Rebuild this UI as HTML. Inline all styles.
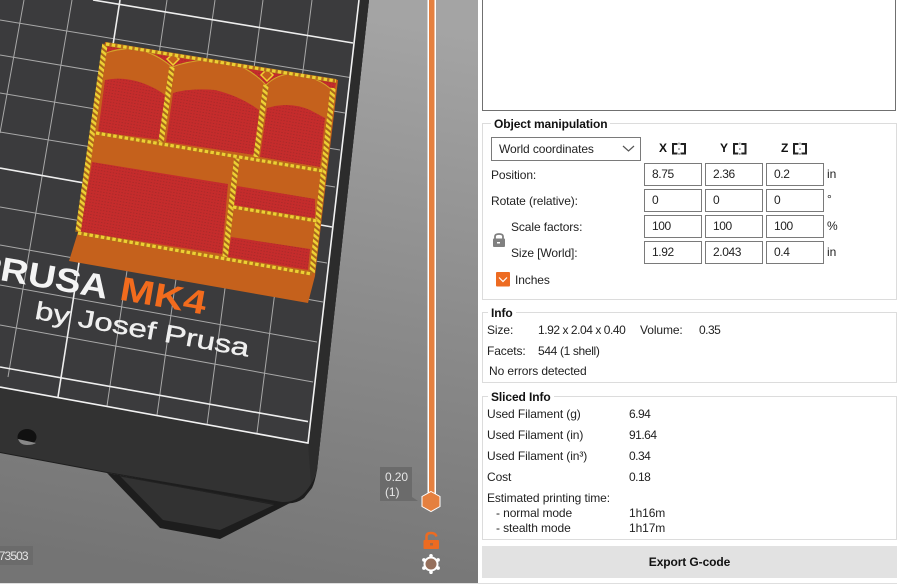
<!DOCTYPE html>
<html><head><meta charset="utf-8">
<style>
html,body{margin:0;padding:0;width:897px;height:584px;overflow:hidden;background:#fff}
body{position:relative;font-family:"Liberation Sans",sans-serif;font-size:12px;color:#222;letter-spacing:-.1px}
.t{position:absolute;white-space:nowrap;line-height:14px;height:14px}
.n{letter-spacing:-.5px}
.b{font-weight:bold;color:#111}
.g{position:absolute;border:1px solid #dcdcdc;box-sizing:border-box}
.i{position:absolute;border:1px solid #7a7a7a;box-sizing:border-box;width:58px;height:23px;line-height:21px;padding-left:7px;background:#fff;color:#222;letter-spacing:-.4px}
svg{position:absolute;left:0;top:0}
</style></head><body>
<svg width="897" height="584" viewBox="0 0 897 584" style="filter:blur(.3px)">
<defs>
<linearGradient id="bg" x1="0.6" y1="0" x2="0.45" y2="1">
<stop offset="0" stop-color="#a4a4a4"/><stop offset=".5" stop-color="#8b8b8b"/><stop offset="1" stop-color="#747474"/>
</linearGradient>
<pattern id="red" width="3" height="3" patternUnits="userSpaceOnUse" patternTransform="rotate(10)">
<rect width="3" height="3" fill="#c52c2c"/><rect width="1.500" height="1" fill="#ab2a2a"/>
</pattern>
<pattern id="stripe" width="4.600" height="4.600" patternUnits="userSpaceOnUse" patternTransform="rotate(40)">
<rect width="4.600" height="4.600" fill="#a8661c"/><rect width="4.600" height="2.600" fill="#edd033"/>
</pattern>
<clipPath id="inner"><path d="M0 0H359L308 443L0 387Z"/></clipPath>
</defs>
<rect width="478" height="584" fill="url(#bg)"/>
<!-- feet -->
<path d="M107 473L160 528L220 539L290 503Z" fill="#1d1d1d"/>
<path d="M120 476L163 520L220 530L274 505Z" fill="#323232"/>
<!-- plate -->
<path d="M0 0H369L317 470Q315 482 312 488L304 498Q295 505 282 503L107 473L0 453Z" fill="#1e1e1e"/>
<path d="M0 0H369L317 470Q315 478 311 484Q300 503 282 502L107 472L0 452Z" fill="#323232"/>
<path d="M120 476L274 504" stroke="#222" stroke-width="1" fill="none"/>
<path d="M360 0H369L317 470L311 484L308 443Z" fill="#2c2c2c"/>
<path d="M0 0H359L308 443L0 387Z" fill="#3b3b3d"/>
<g clip-path="url(#inner)" fill="none" stroke="#a8a8a8" stroke-width="1">
<path d="M24 0L0 133M72 0L8 377M167 0L107 406M215 0L157 415M263 0L207 425M312 0L257 433"/>
<path d="M0 20L353 78M0 55L345 113M0 93L340 150M0 132L335 187M0 207L327 263M0 245L323 302M0 285L317 342M0 325L313 382"/>
<path d="M120 0L58 397M93 0L353 43M0 168L332 227M0 367L308 421.600" stroke="#eee" stroke-width="1.600"/>
</g>
<path d="M359 0L308 443L0 387" fill="none" stroke="#f2f2f2" stroke-width="1.600"/>
<!-- hole -->
<ellipse cx="27" cy="437" rx="9.500" ry="8" fill="#111"/>
<path d="M18 439Q27 441 36 443Q33 445 27 445Q20 445 18 439Z" fill="#888"/>
<!-- text on plate -->
<g font-family="'Liberation Sans',sans-serif" font-weight="bold">
<text transform="translate(-26 275.500) rotate(10)" font-size="33.500" fill="#f4f4f4" textLength="134" lengthAdjust="spacingAndGlyphs">PRUSA</text>
<text transform="translate(118.500 299.500) rotate(10)" font-size="33.500" fill="#f26b1d" textLength="87" lengthAdjust="spacingAndGlyphs">MK4</text>
</g>
<text transform="translate(34 318.500) rotate(10.100)" font-family="'Liberation Sans',sans-serif" font-size="25" fill="#efefef" stroke="#efefef" stroke-width=".4" textLength="217" lengthAdjust="spacingAndGlyphs">by Josef Prusa</text>
<!-- object -->
<path d="M105 42L338 80L315 276L308 303L69 261L78 232Z" fill="#c5611c"/>
<path d="M106 46L336 83L334 92Q318 75 290 74Q276 75 266 85Q242 59 206 60Q188 61 172 67Q150 46 124 48Q114 49 105 53Z" fill="url(#red)"/>
<g fill="url(#red)">
<path d="M98 132L105 80Q125 76 145 84Q160 90 167 97L161 140Z"/>
<path d="M166 142L173 93Q190 88 215 90Q240 96 259 110L255 155Z"/>
<path d="M260 157L267 108Q290 101 310 110L325 118L320 167Z"/>
<path d="M92 162L228 184L222 254L80 232Z"/>
<path d="M237 186L315 199L315 218L234 206Z"/>
<path d="M231 237L310 249L308 270L228 257Z"/>
</g>
<g fill="none" stroke="#d4a52a" stroke-width="1.100">
<path d="M106 53Q120 48 135 49Q156 53 172 67Q188 61 206 60Q242 59 266 85Q276 75 290 74Q318 75 335 93"/>
</g>
<path d="M173 54L179 59L173 65L167 59ZM267 69L273 75L267 81L261 75Z" fill="#c5611c" stroke="#f0cf32" stroke-width="1.500"/>
<!-- walls -->
<g fill="none" stroke="url(#stripe)" stroke-width="5.500">
<path d="M105 44L78 232M333 88L312 273M172 67L161 142M266 85L256 157M237 157L225 258"/>
</g>
<g fill="none" stroke="#b5701c" stroke-width="4">
<path d="M106 44L336 81M96 133L323 171M78 233L312 274M233 207L317 221"/>
</g>
<g fill="none" stroke="#edd033" stroke-width="3.200" stroke-dasharray="3.500 2.300">
<path d="M106 44L336 81M96 133L323 171M78 233L312 274M233 207L317 221"/>
</g>
<!-- slider -->
<rect x="427.500" y="0" width="8.500" height="495" fill="#fff"/>
<rect x="429" y="0" width="5.500" height="495" fill="#e5803f"/>
<path d="M431 491.500L440 496.500V506.500L431 511.500L422 506.500V496.500Z" fill="#e5803f" stroke="#fff" stroke-width="1"/>
<path d="M380 467H412V497L418 501H380Z" fill="#6b6b6b"/>
<!-- lock -->
<rect x="423.500" y="540" width="15.500" height="9" rx="1" fill="#ec6b21"/>
<path d="M426.500 540.500V536.500Q426.500 533 431 533Q435.500 533 436.500 536.500" fill="none" stroke="#ec6b21" stroke-width="2.500"/>
<rect x="430" y="543" width="3" height="2.500" fill="#a56a46"/>
<!-- gear -->
<g fill="#fff">
<circle cx="431" cy="564" r="7.500"/>
<circle cx="431" cy="555.800" r="1.800"/><circle cx="431" cy="572.200" r="1.800"/>
<circle cx="423.900" cy="559.900" r="1.800"/><circle cx="438.100" cy="559.900" r="1.800"/>
<circle cx="423.900" cy="568.100" r="1.800"/><circle cx="438.100" cy="568.100" r="1.800"/>
</g>
<circle cx="431" cy="564" r="5.500" fill="#96705c"/>
<!-- bottom label -->
<rect x="0" y="546" width="33" height="19" fill="#6b6b6b"/>
<!-- right panel icons -->
<path d="M623 146L628.500 151L634 146" fill="none" stroke="#555" stroke-width="1.200"/>
<g fill="none" stroke="#222" stroke-width="2">
<rect x="673" y="144" width="12" height="9.500"/><rect x="734" y="144" width="11.500" height="9.500"/><rect x="794" y="144" width="12" height="9.500"/>
</g>
<g fill="#fff" stroke="none">
<rect x="677.500" y="142" width="3" height="14"/><rect x="738.300" y="142" width="3" height="14"/><rect x="798.500" y="142" width="3" height="14"/>
</g>
<g fill="#999">
<rect x="678.200" y="142.500" width="1.600" height="2"/><rect x="678.200" y="148" width="1.600" height="2"/><rect x="678.200" y="153" width="1.600" height="2"/>
<rect x="739" y="142.500" width="1.600" height="2"/><rect x="739" y="148" width="1.600" height="2"/><rect x="739" y="153" width="1.600" height="2"/>
<rect x="799.200" y="142.500" width="1.600" height="2"/><rect x="799.200" y="148" width="1.600" height="2"/><rect x="799.200" y="153" width="1.600" height="2"/>
</g>
</svg>

<div class="t" style="left:385px;top:470px;color:#e6e6e6;font-size:12px">0.20</div>
<div class="t" style="left:385px;top:485px;color:#e6e6e6;font-size:12px">(1)</div>
<div class="t" style="left:-7px;top:549px;color:#e6e6e6;font-size:12px;letter-spacing:-.9px">473503</div>

<!-- top box -->
<div style="position:absolute;left:482px;top:-3px;width:414px;height:114px;border:1px solid #707070;box-sizing:border-box"></div>

<!-- Object manipulation -->
<div class="g" style="left:482px;top:123px;width:415px;height:177px"></div>
<div class="t b" style="left:491px;top:117px;background:#fff;padding:0 3px;font-size:12px">Object manipulation</div>
<div style="position:absolute;left:491px;top:137px;width:150px;height:24px;border:1px solid #7a7a7a;box-sizing:border-box"></div>
<div class="t" style="left:499px;top:142px">World coordinates</div>
<div class="t b" style="left:659px;top:141px">X</div>
<div class="t b" style="left:720px;top:141px">Y</div>
<div class="t b" style="left:781px;top:141px">Z</div>
<div class="t" style="left:491px;top:168px">Position:</div>
<div class="t" style="left:491px;top:194px">Rotate (relative):</div>
<div class="t" style="left:511px;top:220px">Scale factors:</div>
<div class="t" style="left:511px;top:246px">Size [World]:</div>

<div class="i" style="left:644px;top:163px">8.75</div><div class="i" style="left:705px;top:163px">2.36</div><div class="i" style="left:766px;top:163px">0.2</div>
<div class="i" style="left:644px;top:189px">0</div><div class="i" style="left:705px;top:189px">0</div><div class="i" style="left:766px;top:189px">0</div>
<div class="i" style="left:644px;top:215px">100</div><div class="i" style="left:705px;top:215px">100</div><div class="i" style="left:766px;top:215px">100</div>
<div class="i" style="left:644px;top:241px">1.92</div><div class="i" style="left:705px;top:241px">2.043</div><div class="i" style="left:766px;top:241px">0.4</div>
<div class="t" style="left:827px;top:167px">in</div>
<div class="t" style="left:827px;top:192px">°</div>
<div class="t" style="left:827px;top:219px">%</div>
<div class="t" style="left:827px;top:245px">in</div>

<svg width="897" height="584" viewBox="0 0 897 584">
<path d="M495 238.500V236.500Q495 234 499 234Q503 234 503 236.500V238.500" fill="none" stroke="#808080" stroke-width="1.800"/>
<rect x="493" y="238.500" width="12" height="8.500" rx="1" fill="#808080"/>
<rect x="497" y="242" width="3" height="1.500" fill="#fff"/>
<rect x="496" y="272" width="14" height="14.500" rx="1" fill="#ed6b21"/>
<path d="M499 277.500L503 281.500L507 277.500" fill="none" stroke="#fff" stroke-width="1.200"/>
</svg>
<div class="t" style="left:515px;top:273px">Inches</div>

<!-- Info -->
<div class="g" style="left:482px;top:312px;width:415px;height:71px"></div>
<div class="t b" style="left:488px;top:306px;background:#fff;padding:0 3px">Info</div>
<div class="t" style="left:487px;top:323px">Size:</div>
<div class="t" style="left:538px;top:323px;letter-spacing:-.45px">1.92 x 2.04 x 0.40</div>
<div class="t" style="left:640px;top:323px">Volume:</div>
<div class="t n" style="left:699px;top:323px">0.35</div>
<div class="t" style="left:487px;top:344px">Facets:</div>
<div class="t" style="left:538px;top:344px;letter-spacing:-.35px">544 (1 shell)</div>
<div class="t" style="left:489px;top:364px">No errors detected</div>

<!-- Sliced -->
<div class="g" style="left:482px;top:396px;width:415px;height:144px"></div>
<div class="t b" style="left:488px;top:390px;background:#fff;padding:0 3px">Sliced Info</div>
<div class="t" style="left:487px;top:407px">Used Filament (g)</div><div class="t n" style="left:629px;top:407px">6.94</div>
<div class="t" style="left:487px;top:428px">Used Filament (in)</div><div class="t n" style="left:629px;top:428px">91.64</div>
<div class="t" style="left:487px;top:449px">Used Filament (in³)</div><div class="t n" style="left:629px;top:449px">0.34</div>
<div class="t" style="left:487px;top:470px">Cost</div><div class="t n" style="left:629px;top:470px">0.18</div>
<div class="t" style="left:487px;top:491px">Estimated printing time:</div>
<div class="t" style="left:496px;top:506px">- normal mode</div><div class="t" style="left:629px;top:506px">1h16m</div>
<div class="t" style="left:496px;top:521px">- stealth mode</div><div class="t" style="left:629px;top:521px">1h17m</div>

<!-- button -->
<div style="position:absolute;left:482px;top:546px;width:415px;height:32px;background:#e2e2e2"></div>
<div class="t b" style="left:482px;width:415px;text-align:center;top:555px">Export G-code</div>
<div style="position:absolute;left:0;top:583px;width:897px;height:1px;background:#dedede"></div>
</body></html>
